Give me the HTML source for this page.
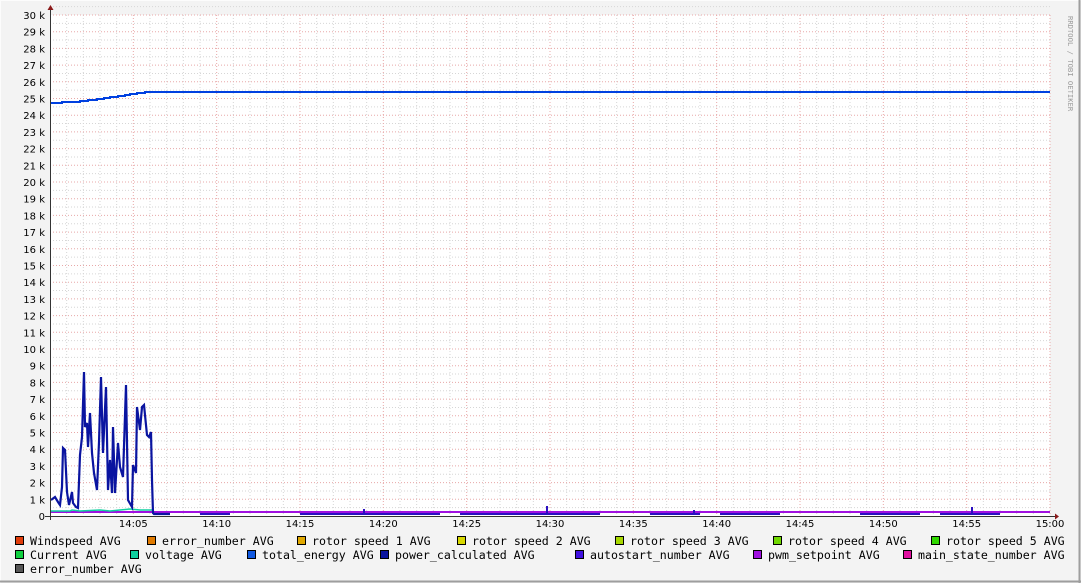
<!DOCTYPE html>
<html><head><style>
html,body{margin:0;padding:0;width:1081px;height:583px;overflow:hidden;background:#f3f3f3}
svg{display:block}
.ax{font-family:"DejaVu Sans","Liberation Sans",sans-serif;font-size:10px;fill:#000}
.lg{font-family:"DejaVu Sans Mono","Liberation Mono",monospace;font-size:11.6px;fill:#000}
</style></head><body>
<svg width="1081" height="583" xmlns="http://www.w3.org/2000/svg">
<rect x="0" y="0" width="1081" height="583" fill="#f3f3f3"/>
<line x1="0.5" y1="0" x2="0.5" y2="583" stroke="#fcfcfc"/>
<line x1="0" y1="0.5" x2="1081" y2="0.5" stroke="#fcfcfc"/>
<line x1="1079.5" y1="0" x2="1079.5" y2="583" stroke="#9e9e9e" stroke-width="2"/>
<line x1="0" y1="581.5" x2="1081" y2="581.5" stroke="#9e9e9e" stroke-width="2"/>
<rect x="50" y="15" width="1000" height="501" fill="#fff"/>
<g id="grid"></g>
<text transform="translate(1068,16) rotate(90)" style="fill:#9a9a9a;font-size:7.2px;font-family:'DejaVu Sans Mono',monospace">RRDTOOL / TOBI OETIKER</text>
<g id="ylab"></g><g id="xlab"></g>
<polyline fill="none" stroke="#0040e0" stroke-width="2" points="50,103 62,103 62,102 80,102 80,101 88,101 88,100 97,100 97,99 104,99 104,98 110,98 110,97 118,97 118,96 125,96 125,95 130,95 130,94 137,94 137,93 145,93 145,92 152,92 1050,92"/>
<polyline fill="none" stroke="#a010e0" stroke-width="2" points="50,512 1050,512"/>
<polyline fill="none" stroke="#10d0a0" stroke-width="1.5" points="50,511 70,511 72,510 80,511 100,510 110,511 120,510 130,509 140,510 152,510"/>
<polyline fill="none" stroke="#0a14a0" stroke-width="2.2" points="51,500 55,497 58,502 60,505 62,487 63,448 65,450 67,492 69,505 72,492 73,503 76,507 78,508 80,455 82,437 84,372 85,427 87,423 88,447 90,413 92,453 94,473 97,490 99,442 101,377 103,453 106,387 108,490 110,460 112,493 113,427 115,493 118,443 120,467 123,477 126,385 128,500 132,507 133,465 136,473 137,407 140,430 142,407 144,405 147,435 149,437 151,432 152,480 153,513 154,514 170,514"/>
<g stroke="#2a10c0" stroke-width="2">
<line x1="200" y1="514" x2="230" y2="514"/><line x1="300" y1="514" x2="440" y2="514"/><line x1="460" y1="514" x2="600" y2="514"/><line x1="650" y1="514" x2="700" y2="514"/><line x1="720" y1="514" x2="780" y2="514"/><line x1="860" y1="514" x2="920" y2="514"/><line x1="940" y1="514" x2="1000" y2="514"/>
<line x1="547" y1="506" x2="547" y2="514"/><line x1="972" y1="507" x2="972" y2="514"/><line x1="364" y1="509" x2="364" y2="514"/><line x1="694" y1="510" x2="694" y2="514"/>
</g>
<line x1="45" y1="516.5" x2="1055" y2="516.5" stroke="#333"/>
<line x1="50.5" y1="10" x2="50.5" y2="520" stroke="#333"/>
<polygon points="1055,513.5 1055,519.5 1059,516.5" fill="#8b1a1a"/>
<polygon points="47.5,10 53.5,10 50.5,5" fill="#8b1a1a"/>
<g id="leg"></g>
</svg>
<script>
var ns="http://www.w3.org/2000/svg";
function el(p,t,a,txt){var e=document.createElementNS(ns,t);for(var k in a)e.setAttribute(k,a[k]);if(txt)e.textContent=txt;document.getElementById(p).appendChild(e);}
for(var i=0;i<=60;i++){var x=50+i*1000/60;if(i%5)el('grid','line',{x1:x,y1:15,x2:x,y2:516,stroke:'#d6d6d6','stroke-dasharray':'1,2'});}
for(var i=0;i<60;i++){var y=516-(i+0.5)*16.7;el('grid','line',{x1:50,y1:y,x2:1050,y2:y,stroke:'#d6d6d6','stroke-dasharray':'1,2'});}
for(var i=1;i<=12;i++){var x=50+i*1000/12;el('grid','line',{x1:x,y1:15,x2:x,y2:516,stroke:'#e8a8a8','stroke-dasharray':'1,2'});
var m=i*5,lab=m==60?'15:00':'14:'+(m<10?'0':'')+m;el('xlab','text',{x:x,y:527,'text-anchor':'middle','class':'ax'},lab);}
for(var i=0;i<=30;i++){var y=516-i*16.7;if(i)el('grid','line',{x1:50,y1:y,x2:1050,y2:y,stroke:'#e8a8a8','stroke-dasharray':'1,2'});
el('ylab','text',{x:45,y:y+4,'text-anchor':'end','class':'ax'},i==0?'0':i+' k');}
var L=[[15,541,'#e03c0a','Windspeed AVG'],[147,541,'#e07a00','error_number AVG'],[297,541,'#e0a800','rotor speed 1 AVG'],[457,541,'#d8d800','rotor speed 2 AVG'],[615,541,'#a8d800','rotor speed 3 AVG'],[773,541,'#70d800','rotor speed 4 AVG'],[931,541,'#30d800','rotor speed 5 AVG'],
[15,555,'#10d040','Current AVG'],[130,555,'#10d0a0','voltage AVG'],[247,555,'#1058e0','total_energy AVG'],[380,555,'#0a14a0','power_calculated AVG'],[575,555,'#4010e0','autostart_number AVG'],[753,555,'#a010e0','pwm_setpoint AVG'],[903,555,'#e010a0','main_state_number AVG'],
[15,569,'#555555','error_number AVG']];
L.forEach(function(l){el('leg','rect',{x:l[0]+0.5,y:l[1]-4.5,width:8,height:8,fill:l[2],stroke:'#000','stroke-width':1});el('leg','text',{x:l[0]+15,y:l[1]+4,'class':'lg'},l[3]);});
</script>
</body></html>
